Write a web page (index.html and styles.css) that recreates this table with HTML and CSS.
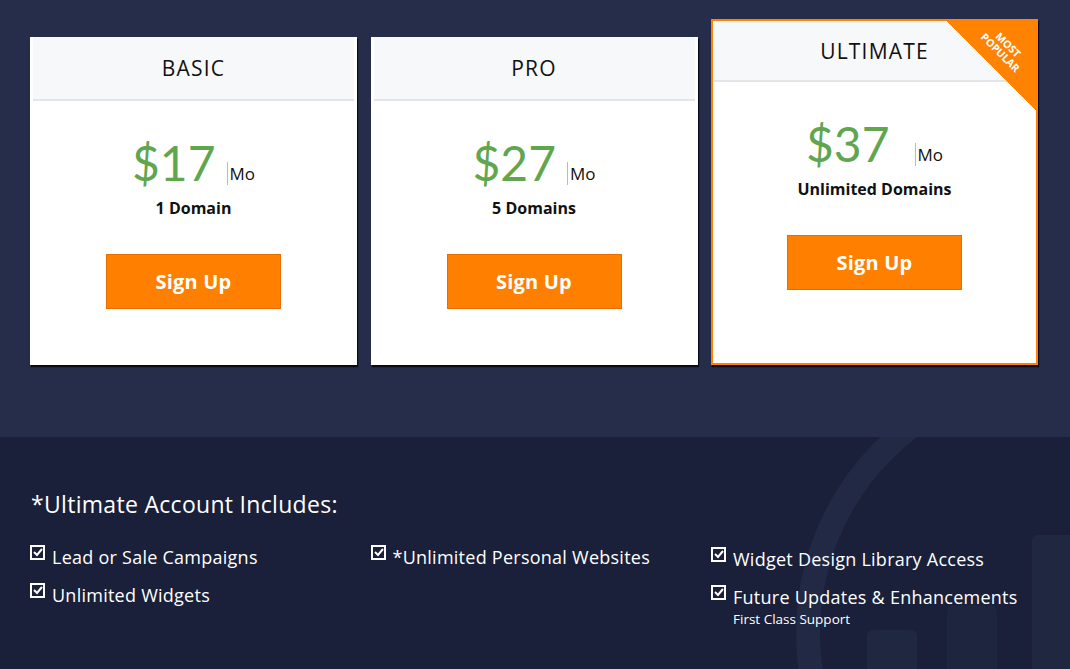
FILE: index.html
```html
<!DOCTYPE html>
<html lang="en">
<head>
<meta charset="utf-8">
<title>Pricing</title>
<link rel="stylesheet" href="styles.css">
</head>
<body>
<section class="pricing">
  <div class="cards">
    <div class="card">
      <div class="card-head">BASIC</div>
      <div class="card-body">
        <div class="price"><span class="amount">$17</span><span class="per">Mo</span></div>
        <div class="domains">1 Domain</div>
        <a class="btn">Sign Up</a>
      </div>
    </div>
    <div class="card">
      <div class="card-head">PRO</div>
      <div class="card-body">
        <div class="price"><span class="amount">$27</span><span class="per">Mo</span></div>
        <div class="domains">5 Domains</div>
        <a class="btn">Sign Up</a>
      </div>
    </div>
    <div class="card card-featured">
      <div class="ribbon"><span class="ribbon-text">MOST<br>POPULAR</span></div>
      <div class="card-head">ULTIMATE</div>
      <div class="card-body">
        <div class="price"><span class="amount">$37</span><span class="per per-wide">Mo</span></div>
        <div class="domains">Unlimited Domains</div>
        <a class="btn">Sign Up</a>
      </div>
    </div>
  </div>
</section>
<section class="includes">
  <svg class="deco" width="1070" height="232" viewBox="0 0 1070 232" aria-hidden="true">
    <circle cx="1066" cy="196" r="258" fill="none" stroke="#212944" stroke-width="24"/>
    <rect x="867" y="193" width="50" height="80" rx="6" fill="#1f2741"/>
    <rect x="947" y="168" width="50" height="100" rx="6" fill="#1d253f"/>
    <rect x="1032" y="98" width="60" height="180" rx="6" fill="#1f2741"/>
  </svg>
  <h2 class="includes-title">*Ultimate Account Includes:</h2>
  <div class="features">
    <ul class="feature-col">
      <li class="feature"><svg class="check" viewBox="0 0 16 16"><rect x="1" y="1" width="13" height="13" fill="none" stroke="#fff" stroke-width="2"/><path d="M4 7l3 3 5-6" fill="none" stroke="#fff" stroke-width="2"/></svg><span>Lead or Sale Campaigns</span></li>
      <li class="feature"><svg class="check" viewBox="0 0 16 16"><rect x="1" y="1" width="13" height="13" fill="none" stroke="#fff" stroke-width="2"/><path d="M4 7l3 3 5-6" fill="none" stroke="#fff" stroke-width="2"/></svg><span>Unlimited Widgets</span></li>
    </ul>
    <ul class="feature-col">
      <li class="feature"><svg class="check" viewBox="0 0 16 16"><rect x="1" y="1" width="13" height="13" fill="none" stroke="#fff" stroke-width="2"/><path d="M4 7l3 3 5-6" fill="none" stroke="#fff" stroke-width="2"/></svg><span>*Unlimited Personal Websites</span></li>
    </ul>
    <ul class="feature-col col-low">
      <li class="feature"><svg class="check" viewBox="0 0 16 16"><rect x="1" y="1" width="13" height="13" fill="none" stroke="#fff" stroke-width="2"/><path d="M4 7l3 3 5-6" fill="none" stroke="#fff" stroke-width="2"/></svg><span>Widget Design Library Access</span></li>
      <li class="feature"><svg class="check" viewBox="0 0 16 16"><rect x="1" y="1" width="13" height="13" fill="none" stroke="#fff" stroke-width="2"/><path d="M4 7l3 3 5-6" fill="none" stroke="#fff" stroke-width="2"/></svg><span>Future Updates &amp; Enhancements<small class="sub">First Class Support</small></span></li>
    </ul>
  </div>
</section>
</body>
</html>
```
FILE: styles.css
```css
* { box-sizing: border-box; }
html, body { margin: 0; padding: 0; }
body {
  width: 1070px;
  height: 669px;
  overflow: hidden;
  font-family: "Open Sans", "DejaVu Sans", sans-serif;
  background: #1a2039;
}
.pricing {
  height: 437px;
  background: #252d4a;
  padding: 19px 32px 0 30px;
}
.cards {
  display: grid;
  grid-template-columns: repeat(3, 1fr);
  column-gap: 13.5px;
  align-items: end;
}
.card {
  position: relative;
  background: #fff;
  height: 328px;
  box-shadow: 1px 2px 1px rgba(5, 8, 18, 0.9);
  overflow: hidden;
}
.card-featured {
  height: 346px;
  border: 2px solid #ff8300;
}
.card-head {
  margin: 0 3px;
  height: 64px;
  background: #f7f8fa;
  border-bottom: 2px solid #e2e6eb;
  display: flex;
  align-items: center;
  justify-content: center;
  font-size: 21px;
  color: #111;
  letter-spacing: 1.2px;
}
.card-featured .card-head { height: 61px; margin: 0 1px; }
.card-body {
  display: flex;
  flex-direction: column;
  align-items: center;
  padding-top: 36px;
}
.price {
  display: flex;
  align-items: flex-end;
  height: 52px;
}
.amount {
  font-family: "Lato", "Open Sans", sans-serif;
  font-weight: 400;
  font-size: 48px;
  line-height: 52px;
  color: #5fa64f;
}
.per {
  margin-left: 11px;
  margin-bottom: 4px;
  padding-left: 2px;
  border-left: 1px solid #bbb;
  font-size: 17px;
  line-height: 23px;
  color: #111;
}
.per-wide { margin-left: 25px; }
.domains {
  margin-top: 8px;
  font-size: 16px;
  font-weight: 700;
  color: #111;
  line-height: 22px;
}
.btn {
  margin-top: 35px;
  width: 175px;
  height: 55px;
  background: #ff8000;
  border: 1px solid #e66f00;
  color: #fff;
  font-size: 20px;
  font-weight: 700;
  display: flex;
  align-items: center;
  justify-content: center;
  letter-spacing: 0.2px;
}
.ribbon {
  position: absolute;
  top: 0;
  right: 0;
  width: 90px;
  height: 90px;
  background: linear-gradient(to bottom left, #ff8300 50%, transparent 50%);
  z-index: 2;
}
.ribbon-text {
  position: absolute;
  top: 17px;
  right: -8px;
  width: 80px;
  transform: rotate(45deg);
  color: #fff;
  font-size: 10.5px;
  font-weight: 700;
  line-height: 11px;
  text-align: center;
}
.includes {
  position: relative;
  height: 232px;
  overflow: hidden;
  padding: 52px 32px 0 30px;
  color: #fff;
}
.deco {
  position: absolute;
  left: 0;
  top: 0;
}
.includes-title {
  position: relative;
  margin: 0 0 26px 1px;
  font-size: 23px;
  font-weight: 400;
  line-height: 30px;
  letter-spacing: 0.3px;
}
.features {
  position: relative;
  display: grid;
  grid-template-columns: repeat(3, 1fr);
  column-gap: 13.5px;
}
.feature-col {
  list-style: none;
  margin: 0;
  padding: 0;
}
.col-low { padding-top: 2px; }
.feature {
  display: flex;
  align-items: flex-start;
  gap: 6px;
  font-size: 18px;
  line-height: 24px;
  letter-spacing: 0.25px;
  margin-bottom: 14px;
}
.check {
  width: 16px;
  height: 16px;
  flex: none;
  margin-top: 0;
}
.feature span { display: flex; flex-direction: column; }
.sub {
  font-size: 13.5px;
  line-height: 20px;
  letter-spacing: 0;
}
```
